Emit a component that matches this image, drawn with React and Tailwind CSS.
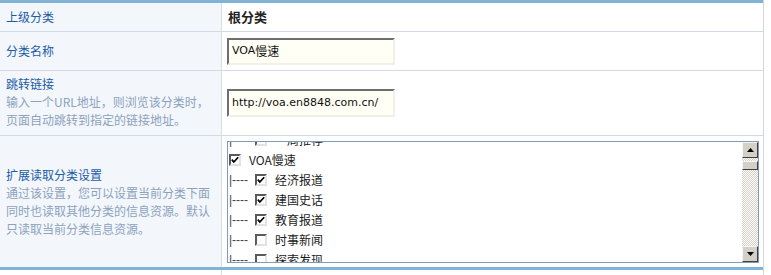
import React, { useEffect, useRef } from "react";

const cjk = "font-['Noto_Sans_CJK_SC','Noto_Sans',sans-serif]";

function Check({ checked }) {
  return (
    <span className="inline-flex w-[12px] h-[12px] shrink-0 items-center justify-center bg-white border-2 border-t-[#5a5a5a] border-l-[#5a5a5a] border-b-[#e2e2e2] border-r-[#e2e2e2]">
      {checked && (
        <svg width="8" height="8" viewBox="0 0 8 8">
          <path d="M0.8 3.6 L2.8 6 L7.2 1.2" stroke="#000" strokeWidth="1.7" fill="none" />
        </svg>
      )}
    </span>
  );
}

function Item({ child, checked, label }) {
  return (
    <div className="flex items-center h-[20px] whitespace-nowrap">
      {child && (
        <span className="w-[26px] font-['Liberation_Sans',sans-serif] text-[12px] text-[#444] leading-none">|----</span>
      )}
      <Check checked={checked} />
      <span className="ml-[8px] text-[12px] text-[#222]">{label}</span>
    </div>
  );
}

function ScrollBtn({ up }) {
  return (
    <div className="w-[16px] h-[16px] bg-[#d4d0c8] border border-t-[#f4f4f4] border-l-[#f4f4f4] border-b-[#404040] border-r-[#404040] flex items-center justify-center">
      <svg width="7" height="4" viewBox="0 0 7 4">
        {up ? <path d="M0 4 L3.5 0 L7 4 Z" fill="#000" /> : <path d="M0 0 L3.5 4 L7 0 Z" fill="#000" />}
      </svg>
    </div>
  );
}

export default function App() {
  const ref = useRef(null);
  useEffect(() => {
    if (ref.current) ref.current.scrollTop = 13;
  }, []);
  const label = "flex flex-col justify-center px-[6px] bg-[#f3f7fc] border-r border-[#d8dee8]";
  const rowB = "border-b border-[#d4dae5]";
  return (
    <div className={`w-[764px] bg-white border-r border-[#d6d6d6] ${cjk} text-[12px]`}>
      <div className="h-[3px] bg-[#80b3d6]" />
      <div className={`grid grid-cols-[222px_1fr] ${rowB}`}>
        <div className={`${label} h-[28px]`}>
          <span className="text-[#1b5ba6]">上级分类</span>
        </div>
        <div className="flex items-center pl-[6px] font-bold text-[#222] text-[13px]">根分类</div>
      </div>
      <div className={`grid grid-cols-[222px_1fr] ${rowB}`}>
        <div className={`${label} h-[38px]`}>
          <span className="text-[#1b5ba6]">分类名称</span>
        </div>
        <div className="flex items-center pl-[5px]">
          <div className="w-[168px] h-[27px] bg-[#fffff5] border-2 border-t-[#6e6e6e] border-l-[#6e6e6e] border-b-[#f0f0e8] border-r-[#f0f0e8] flex items-center pl-[3px] font-['DejaVu_Sans',sans-serif] text-[11px] text-[#111]">
            VOA<span className={`${cjk} text-[12px]`}>慢速</span>
          </div>
        </div>
      </div>
      <div className={`grid grid-cols-[222px_1fr] ${rowB}`}>
        <div className={`${label} h-[64px] leading-[18px] pb-[3px]`}>
          <span className="text-[#1b5ba6]">跳转链接</span>
          <span className="text-[#8da2bd]">输入一个URL地址，则浏览该分类时，</span>
          <span className="text-[#8da2bd]">页面自动跳转到指定的链接地址。</span>
        </div>
        <div className="flex items-center pl-[5px]">
          <div className="w-[168px] h-[28px] bg-[#fffff5] border-2 border-t-[#6e6e6e] border-l-[#6e6e6e] border-b-[#f0f0e8] border-r-[#f0f0e8] flex items-center pl-[3px] font-['DejaVu_Sans',sans-serif] text-[11px] text-[#111]">
            http://voa.en8848.com.cn/
          </div>
        </div>
      </div>
      <div className="grid grid-cols-[222px_1fr] border-b-[3px] border-[#80b3d6]">
        <div className={`${label} h-[131px] leading-[18px]`}>
          <span className="text-[#1b5ba6]">扩展读取分类设置</span>
          <span className="text-[#8da2bd]">通过该设置，您可以设置当前分类下面</span>
          <span className="text-[#8da2bd]">同时也读取其他分类的信息资源。默认</span>
          <span className="text-[#8da2bd]">只读取当前分类信息资源。</span>
        </div>
        <div className="flex items-center pl-[5px]">
          <div className="w-[532px] h-[122px] border border-[#7f9db9] flex bg-white">
            <div ref={ref} className="flex-1 overflow-hidden pl-[1px]">
              <div className="pt-[1px]">
                <Item child checked={false} label="一周推荐" />
                <Item checked label="VOA慢速" />
                <Item child checked label="经济报道" />
                <Item child checked label="建国史话" />
                <Item child checked label="教育报道" />
                <Item child checked={false} label="时事新闻" />
                <Item child checked={false} label="探索发现" />
                <Item child checked={false} label="美国万花筒" />
                <Item child checked={false} label="科技报道" />
              </div>
            </div>
            <div className="w-[16px] flex flex-col bg-[repeating-conic-gradient(#d4d0c8_0_25%,#ffffff_0_50%)] bg-[length:2px_2px]">
              <ScrollBtn up />
              <div className="h-[3px]" />
              <div className="h-[9px] bg-[#d4d0c8] border border-t-[#f4f4f4] border-l-[#f4f4f4] border-b-[#404040] border-r-[#404040]" />
              <div className="flex-1" />
              <ScrollBtn />
            </div>
          </div>
        </div>
      </div>
      <div className="grid grid-cols-[222px_1fr]">
        <div className="h-[6px] bg-white border-r border-[#d8dee8]" />
        <div />
      </div>
    </div>
  );
}
